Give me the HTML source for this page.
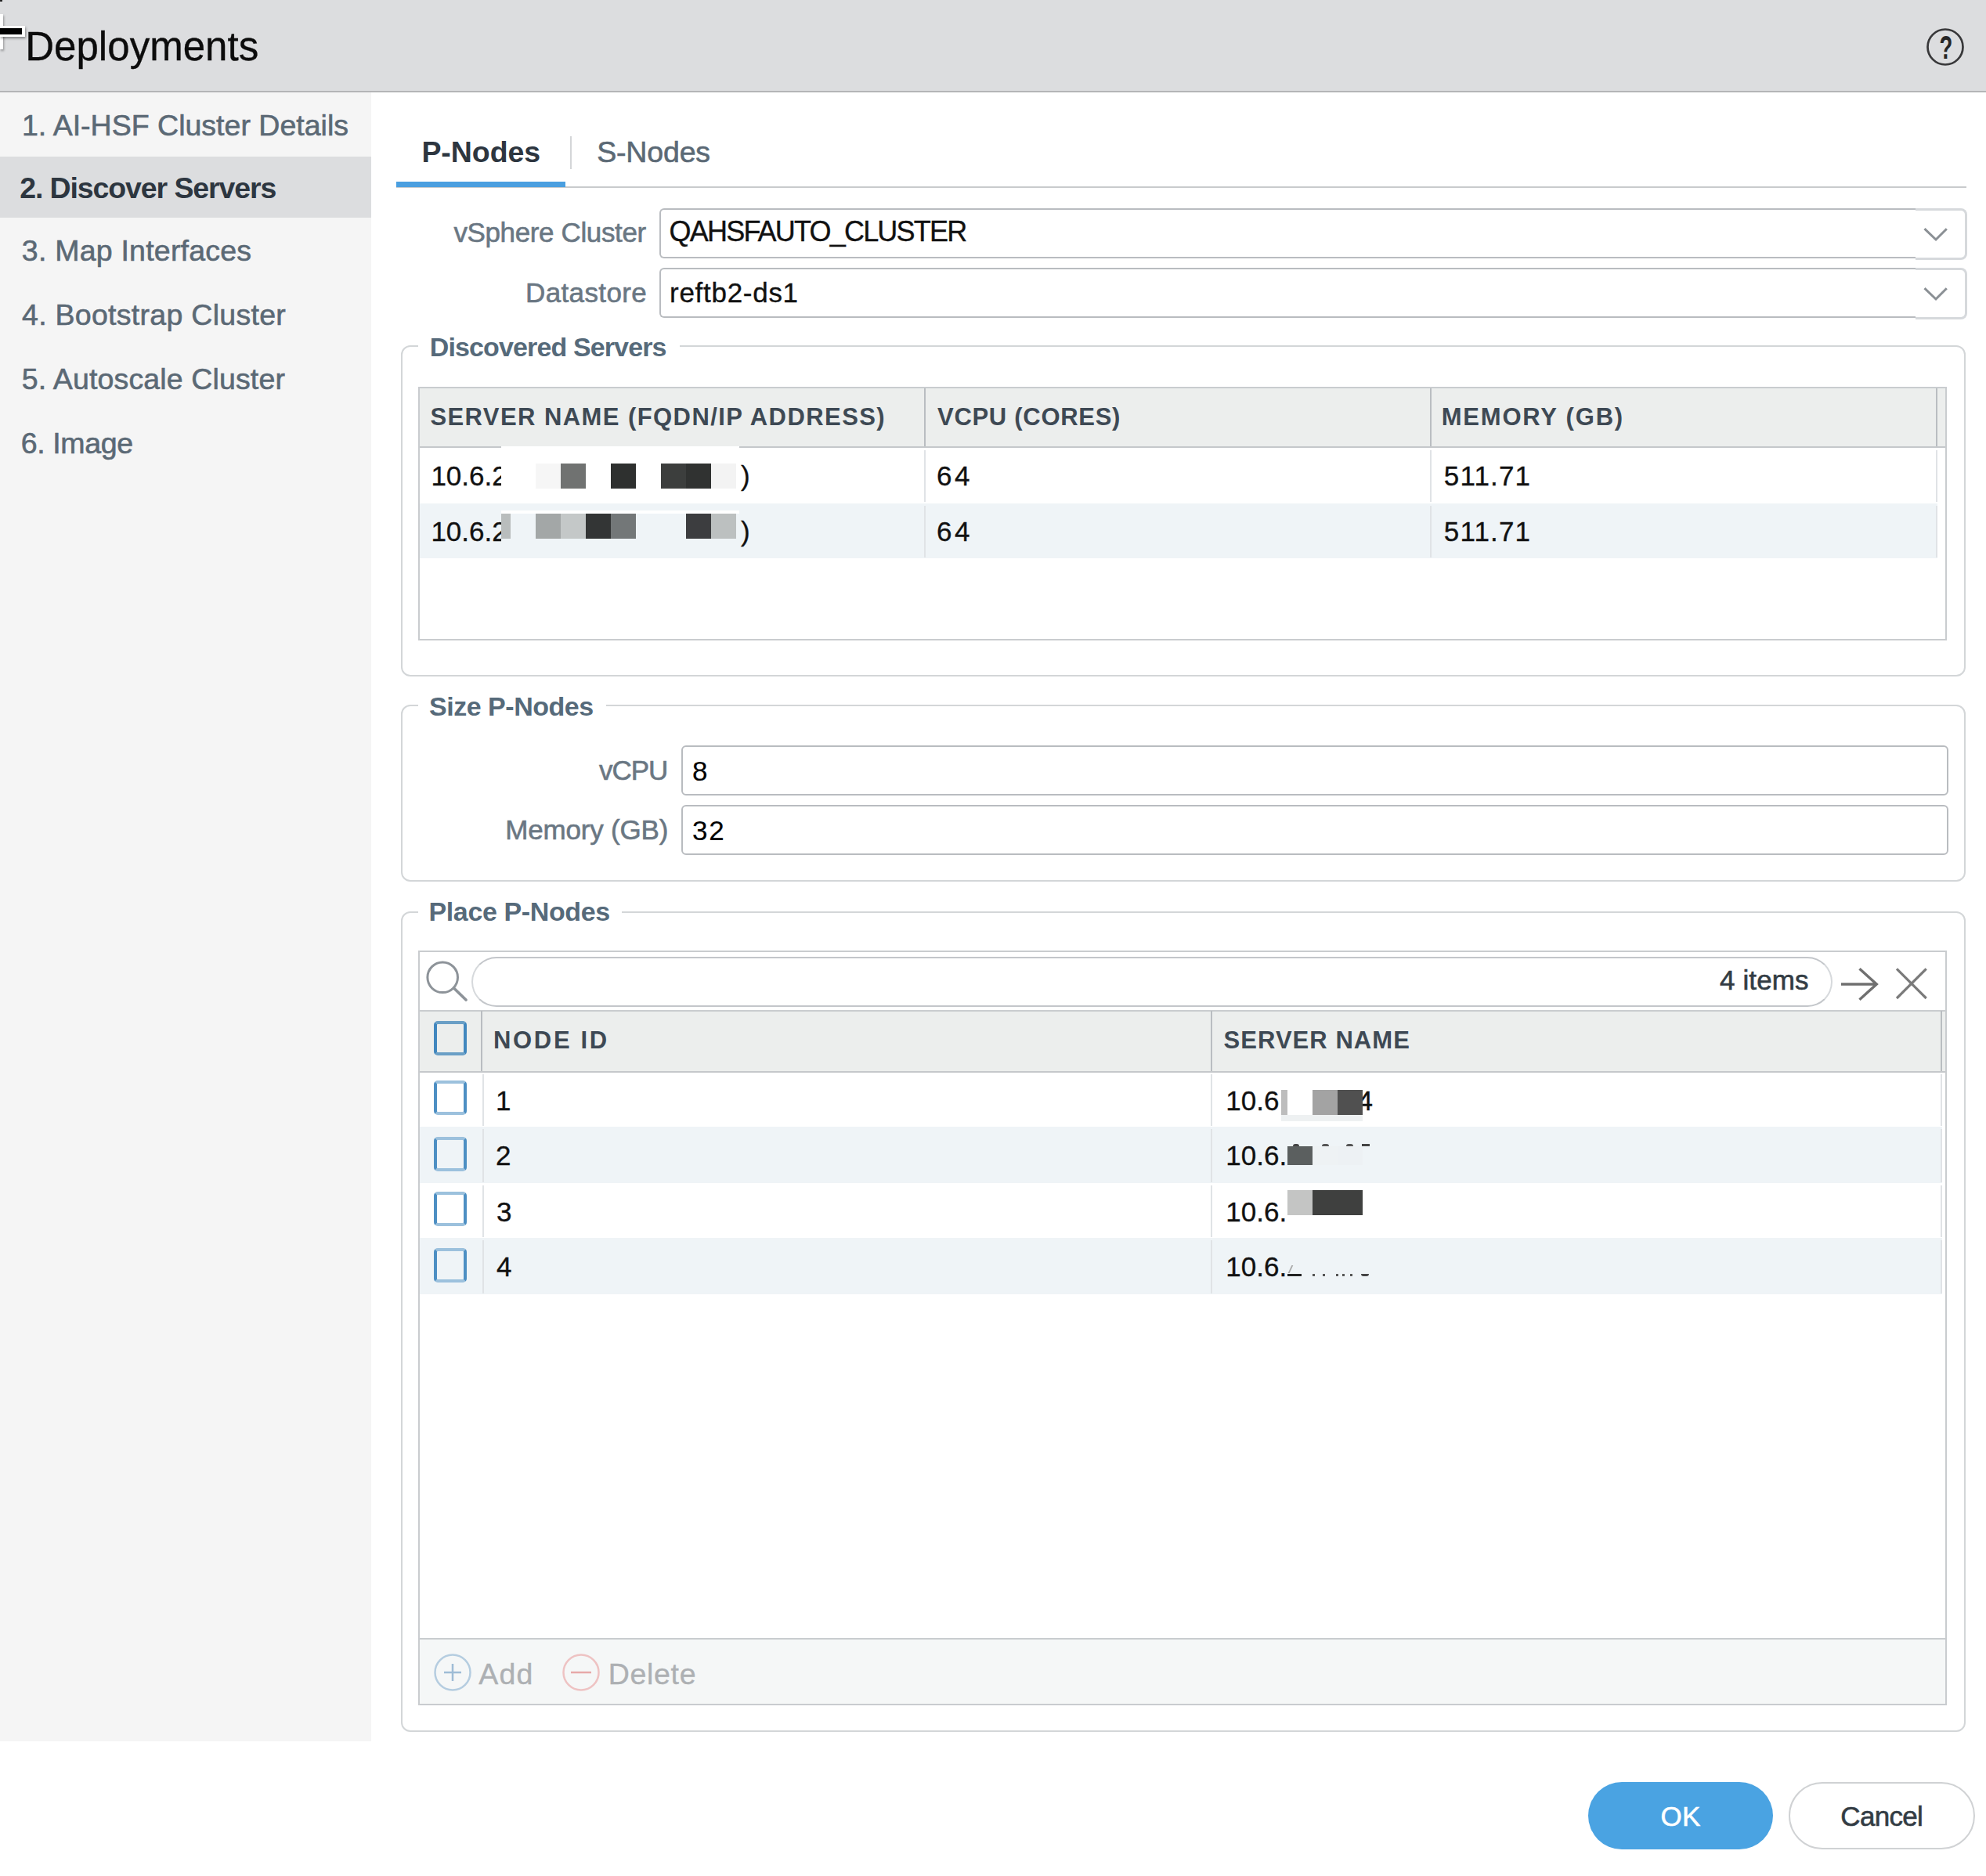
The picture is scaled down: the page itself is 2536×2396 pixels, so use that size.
<!DOCTYPE html>
<html lang="en"><head><meta charset="utf-8"><title>Deployments</title>
<style>
html,body{margin:0;padding:0;}
body{width:2536px;height:2396px;position:relative;overflow:hidden;background:#fff;font-family:"Liberation Sans",sans-serif;}
.a{position:absolute;box-sizing:border-box;}
.t{position:absolute;white-space:nowrap;line-height:1;font-family:"Liberation Sans",sans-serif;}
#hdr{left:0;top:0;width:2536px;height:116px;background:#dcdddf;}
#hdrline{left:0;top:116px;width:2536px;height:2px;background:#b4b5b7;}
#side{left:0;top:118px;width:474px;height:2106px;background:#f5f5f5;}
#sel{left:0;top:200px;width:474px;height:78px;background:#dcdddf;}
#tabline{left:506px;top:238px;width:2005px;height:2px;background:#c9cbcd;}
#tabblue{left:506px;top:232px;width:216px;height:7px;background:#4a9fe0;}
#tabsep{left:728px;top:174px;width:2px;height:42px;background:#d4d6d8;}
.inp{border:2px solid #b9bcc0;border-radius:6px;background:#fff;}
.trig{border:3px solid #d6d9dc;border-left:none;border-radius:0 8px 8px 0;background:#fff;}
.fs{border:2px solid #d3d6d8;border-radius:12px;}
.lg{background:#fff;height:6px;}
.grid{border:2px solid #c9cccf;background:#fff;}
.gh{background:#eceeed;border-bottom:2px solid #c5c8cb;}
.vd{width:2px;background:#b9bdc1;}
.vl{width:2px;background:#e0e3e6;}
.alt{background:#eff4f7;}
.cb{width:42px;height:44px;border:4px solid;border-color:#9cc1dd #4d8fc3;border-radius:5px;background:transparent;}
.cbh{border-color:#6a9fc6 #4187be;}
.px{position:absolute;}
.mz{z-index:5;}

</style></head><body>
<div class="a" id="hdr"></div>
<div class="a" id="hdrline"></div>
<div class="a" id="side"></div>
<div class="a" id="sel"></div>
<svg class="a" style="left:2456px;top:32px" width="56" height="56" viewBox="0 0 56 56"><circle cx="28" cy="28" r="22.5" fill="none" stroke="#38383a" stroke-width="2.7"/></svg>
<div class="a" style="left:0;top:18px;width:4px;height:45px;background:#fff;box-shadow:1px 2px 3px rgba(0,0,0,.35)"></div>
<div class="a" style="left:0;top:33px;width:32px;height:14px;background:#fff;box-shadow:1px 2px 3px rgba(0,0,0,.4)"></div>
<div class="a" style="left:0;top:36px;width:28px;height:8px;background:#000"></div>
<div class="a" style="left:0;top:0;width:3px;height:2px;background:#222"></div>
<div class="a" style="left:2463.5px;top:39.2px;width:42px;height:43px;text-align:center;font-weight:700;font-size:43px;line-height:1;color:#262626;transform:scaleX(.64)">?</div>
<div class="a" id="tabline"></div>
<div class="a" id="tabblue"></div>
<div class="a" id="tabsep"></div>

<!-- combos -->
<div class="a inp" style="left:842px;top:266px;width:1606px;height:64px;border-right:none;border-radius:6px 0 0 6px"></div>
<div class="a trig" style="left:2446px;top:266px;width:66px;height:66px"></div>
<svg class="a" style="left:2452px;top:286px" width="40" height="28" viewBox="0 0 40 28"><path d="M5.5 6.2 L20 20 L33.8 6.2" fill="none" stroke="#8b9095" stroke-width="3"/></svg>
<div class="a inp" style="left:842px;top:342px;width:1606px;height:64px;border-right:none;border-radius:6px 0 0 6px"></div>
<div class="a trig" style="left:2446px;top:342px;width:66px;height:66px"></div>
<svg class="a" style="left:2452px;top:362px" width="40" height="28" viewBox="0 0 40 28"><path d="M5.5 6.2 L20 20 L33.8 6.2" fill="none" stroke="#8b9095" stroke-width="3"/></svg>

<!-- fieldset 1 -->
<div class="a fs" style="left:512px;top:441px;width:1998px;height:423px"></div>
<div class="a lg" style="left:534px;top:439px;width:334px"></div>
<div class="a grid" style="left:534px;top:494px;width:1952px;height:324px"></div>
<div class="a gh" style="left:536px;top:496px;width:1948px;height:76px"></div>
<div class="a vd" style="left:1180px;top:496px;height:74px"></div>
<div class="a vd" style="left:1826px;top:496px;height:74px"></div>
<div class="a vd" style="left:2472px;top:496px;height:74px"></div>
<div class="a alt" style="left:536px;top:643px;width:1938px;height:70px"></div>
<div class="a vl" style="left:1180px;top:575px;height:66px"></div>
<div class="a vl" style="left:1180px;top:646px;height:66px"></div>
<div class="a vl" style="left:1826px;top:575px;height:66px"></div>
<div class="a vl" style="left:1826px;top:646px;height:66px"></div>
<div class="a vl" style="left:2472px;top:575px;height:66px"></div>
<div class="a vl" style="left:2472px;top:646px;height:66px"></div>

<!-- fieldset 2 -->
<div class="a fs" style="left:512px;top:900px;width:1998px;height:226px"></div>
<div class="a lg" style="left:534px;top:898px;width:240px"></div>
<div class="a inp" style="left:870px;top:952px;width:1618px;height:64px"></div>
<div class="a inp" style="left:870px;top:1028px;width:1618px;height:64px"></div>

<!-- fieldset 3 -->
<div class="a fs" style="left:512px;top:1164px;width:1998px;height:1048px"></div>
<div class="a lg" style="left:534px;top:1162px;width:260px"></div>
<div class="a grid" style="left:534px;top:1214px;width:1952px;height:964px"></div>
<div class="a" style="left:536px;top:1290px;width:1948px;height:2px;background:#c9cccf"></div>
<div class="a" style="left:602px;top:1222px;width:1738px;height:64px;border:2px solid #c3c6ca;border-left-color:#d6d9dc;border-right-color:#d6d9dc;border-radius:32px;background:#fff"></div>
<svg class="a" style="left:540px;top:1224px" width="62" height="62" viewBox="0 0 62 62"><circle cx="25.2" cy="24.3" r="19.3" fill="none" stroke="#8d9399" stroke-width="3"/><path d="M39.5 38 L55 53" stroke="#8d9399" stroke-width="3.6" stroke-linecap="round"/></svg>
<svg class="a" style="left:2346px;top:1232px" width="56" height="50" viewBox="0 0 56 50"><path d="M5 25 H50 M28.5 5.3 L50.3 25 L28.5 44.7" fill="none" stroke="#707070" stroke-width="3.4"/></svg>
<svg class="a" style="left:2417px;top:1232px" width="48" height="48" viewBox="0 0 48 48"><path d="M5 5.3 L42.7 43 M42.7 5.3 L5 43" fill="none" stroke="#7a7a7a" stroke-width="3.2"/></svg>
<div class="a gh" style="left:536px;top:1292px;width:1948px;height:78px"></div>
<div class="a vd" style="left:614px;top:1291px;height:77px"></div>
<div class="a vd" style="left:1546px;top:1291px;height:77px"></div>
<div class="a vd" style="left:2478px;top:1291px;height:77px"></div>
<div class="a alt" style="left:536px;top:1439px;width:1944px;height:72px"></div>
<div class="a alt" style="left:536px;top:1581px;width:1944px;height:72px"></div>
<div class="a vl" style="left:616px;top:1372px;height:66px"></div>
<div class="a vl" style="left:616px;top:1442px;height:68px"></div>
<div class="a vl" style="left:616px;top:1514px;height:66px"></div>
<div class="a vl" style="left:616px;top:1584px;height:68px"></div>
<div class="a vl" style="left:1546px;top:1372px;height:66px"></div>
<div class="a vl" style="left:1546px;top:1442px;height:68px"></div>
<div class="a vl" style="left:1546px;top:1514px;height:66px"></div>
<div class="a vl" style="left:1546px;top:1584px;height:68px"></div>
<div class="a vl" style="left:2478px;top:1372px;height:66px"></div>
<div class="a vl" style="left:2478px;top:1442px;height:68px"></div>
<div class="a vl" style="left:2478px;top:1514px;height:66px"></div>
<div class="a vl" style="left:2478px;top:1584px;height:68px"></div>
<div class="a cb cbh" style="left:554px;top:1304px"></div>
<div class="a cb" style="left:554px;top:1380px"></div>
<div class="a cb" style="left:554px;top:1452px"></div>
<div class="a cb" style="left:554px;top:1522px"></div>
<div class="a cb" style="left:554px;top:1594px"></div>
<div class="a" style="left:536px;top:2092px;width:1948px;height:84px;background:#f5f7f7;border-top:2px solid #c9cccf"></div>
<svg class="a" style="left:552px;top:2110px" width="52" height="52" viewBox="0 0 52 52"><circle cx="26" cy="26" r="22.5" fill="none" stroke="#b5cde0" stroke-width="2.5"/><path d="M15 26 H37 M26 15 V37" stroke="#9fbdd6" stroke-width="2.5"/></svg>
<svg class="a" style="left:716px;top:2110px" width="52" height="52" viewBox="0 0 52 52"><circle cx="26" cy="26" r="22.5" fill="none" stroke="#eec3c3" stroke-width="2.5"/><path d="M13 26 H39" stroke="#e7a9a9" stroke-width="2.5"/></svg>

<!-- buttons -->
<div class="a" style="left:2028px;top:2276px;width:236px;height:86px;border-radius:44px;background:#4aa3e2"></div>
<div class="a" style="left:2284px;top:2276px;width:238px;height:86px;border-radius:44px;background:#fff;border:2px solid #d0d2d4"></div>

<!-- redaction mosaics grid 1 -->
<div class="a mz" style="left:640px;top:570px;width:304px;height:72px;background:#fff"></div>
<div class="a mz" style="left:684px;top:592px;width:32px;height:32px;background:#f6f6f6"></div>
<div class="a mz" style="left:716px;top:592px;width:32px;height:32px;background:#707271"></div>
<div class="a mz" style="left:780px;top:592px;width:32px;height:32px;background:#2e302f"></div>
<div class="a mz" style="left:844px;top:592px;width:32px;height:32px;background:#3c3e3d"></div>
<div class="a mz" style="left:876px;top:592px;width:32px;height:32px;background:#303231"></div>
<div class="a mz" style="left:908px;top:592px;width:32px;height:32px;background:#f3f3f3"></div>
<div class="a mz" style="left:640px;top:652px;width:304px;height:42px;background:#eff4f7"></div>
<div class="a mz" style="left:640px;top:652px;width:304px;height:4px;background:#fff"></div>
<div class="a mz" style="left:640px;top:656px;width:12px;height:32px;background:#b9bdbd"></div>
<div class="a mz" style="left:684px;top:656px;width:32px;height:32px;background:#a3a7a7"></div>
<div class="a mz" style="left:716px;top:656px;width:32px;height:32px;background:#c4c8c8"></div>
<div class="a mz" style="left:748px;top:656px;width:32px;height:32px;background:#333535"></div>
<div class="a mz" style="left:780px;top:656px;width:32px;height:32px;background:#737778"></div>
<div class="a mz" style="left:876px;top:656px;width:32px;height:32px;background:#3c3d3f"></div>
<div class="a mz" style="left:908px;top:656px;width:32px;height:32px;background:#bcc0c0"></div>
<!-- redaction mosaics grid 2 -->
<div class="a mz" style="left:1636px;top:1392px;width:104px;height:32px;background:#fff"></div>
<div class="a mz" style="left:1636px;top:1392px;width:8px;height:32px;background:#bdbdbd"></div>
<div class="a mz" style="left:1676px;top:1392px;width:32px;height:32px;background:#a3a3a3"></div>
<div class="a mz" style="left:1708px;top:1392px;width:32px;height:32px;background:#505050"></div>
<div class="a mz" style="left:1636px;top:1424px;width:104px;height:8px;background:#eef1f2"></div>
<div class="a mz" style="left:1644px;top:1464px;width:32px;height:24px;background:#5b5f5f"></div>
<div class="a mz" style="left:1676px;top:1464px;width:32px;height:24px;background:#eef2f4"></div>
<div class="a mz" style="left:1708px;top:1464px;width:32px;height:24px;background:#edf1f4"></div>
<div class="a mz" style="left:1644px;top:1520px;width:32px;height:32px;background:#c4c5c4"></div>
<div class="a mz" style="left:1676px;top:1520px;width:64px;height:32px;background:#3f403f"></div>

<!-- remnants -->
<div class="a mz" style="left:1651px;top:1461px;width:8px;height:3px;border-radius:4px 4px 0 0;background:#444"></div>
<div class="a mz" style="left:1688px;top:1461px;width:9px;height:3px;border-radius:4px 4px 0 0;background:#555"></div>
<div class="a mz" style="left:1719px;top:1461px;width:9px;height:3px;border-radius:4px 4px 0 0;background:#555"></div>
<div class="a mz" style="left:1739px;top:1461px;width:10px;height:3px;background:#444"></div>
<div class="a mz" style="left:1644px;top:1627px;width:18px;height:3px;background:#222"></div>
<div class="a mz" style="left:1647px;top:1616px;width:2px;height:10px;background:#aaa;transform:skewX(-25deg)"></div>
<div class="a mz" style="left:1676px;top:1627px;width:3px;height:3px;background:#555"></div>
<div class="a mz" style="left:1689px;top:1627px;width:3px;height:3px;background:#555"></div>
<div class="a mz" style="left:1706px;top:1627px;width:3px;height:3px;background:#555"></div>
<div class="a mz" style="left:1714px;top:1627px;width:3px;height:3px;background:#555"></div>
<div class="a mz" style="left:1724px;top:1627px;width:3px;height:3px;background:#555"></div>
<div class="a mz" style="left:1738px;top:1627px;width:10px;height:3px;border-radius:0 0 4px 4px;background:#444"></div>

<span class="t" id="t0" style="left:32.2px;top:34.1px;font-size:51px;font-weight:400;color:#0c0c0c;letter-spacing:0.040px;-webkit-text-stroke:0.35px #0c0c0c;">Deployments</span>
<span class="t" id="t1" style="left:28.0px;top:141.7px;font-size:37.5px;font-weight:400;color:#5b6975;letter-spacing:0.008px;-webkit-text-stroke:0.6px #5b6975;">1. AI-HSF Cluster Details</span>
<span class="t" id="t2" style="left:25.2px;top:221.6px;font-size:37.5px;font-weight:700;color:#2d3640;letter-spacing:-1.111px;">2. Discover Servers</span>
<span class="t" id="t3" style="left:27.8px;top:302.0px;font-size:37.5px;font-weight:400;color:#5b6975;letter-spacing:0.225px;-webkit-text-stroke:0.6px #5b6975;">3. Map Interfaces</span>
<span class="t" id="t4" style="left:28.0px;top:383.6px;font-size:37.5px;font-weight:400;color:#5b6975;letter-spacing:0.284px;-webkit-text-stroke:0.6px #5b6975;">4. Bootstrap Cluster</span>
<span class="t" id="t5" style="left:27.8px;top:466.1px;font-size:37.5px;font-weight:400;color:#5b6975;letter-spacing:0.137px;-webkit-text-stroke:0.6px #5b6975;">5. Autoscale Cluster</span>
<span class="t" id="t6" style="left:26.8px;top:548.1px;font-size:37.5px;font-weight:400;color:#5b6975;letter-spacing:-0.386px;-webkit-text-stroke:0.6px #5b6975;">6. Image</span>
<span class="t" id="t7" style="left:538.4px;top:175.5px;font-size:37.5px;font-weight:700;color:#2d3640;letter-spacing:-0.050px;">P-Nodes</span>
<span class="t" id="t8" style="left:762.2px;top:175.5px;font-size:37.5px;font-weight:400;color:#5b6975;letter-spacing:-0.167px;-webkit-text-stroke:0.6px #5b6975;">S-Nodes</span>
<span class="t" id="t9" style="left:579.4px;top:278.8px;font-size:35px;font-weight:400;color:#6a7783;letter-spacing:-0.371px;-webkit-text-stroke:0.6px #6a7783;">vSphere Cluster</span>
<span class="t" id="t10" style="left:671.0px;top:355.6px;font-size:35px;font-weight:400;color:#6a7783;letter-spacing:0.375px;-webkit-text-stroke:0.6px #6a7783;">Datastore</span>
<span class="t" id="t11" style="left:854.6px;top:277.9px;font-size:36px;font-weight:400;color:#111;letter-spacing:-1.806px;-webkit-text-stroke:0.35px #111;">QAHSFAUTO_CLUSTER</span>
<span class="t" id="t12" style="left:855.0px;top:355.6px;font-size:35px;font-weight:400;color:#111;letter-spacing:0.722px;-webkit-text-stroke:0.35px #111;">reftb2-ds1</span>
<span class="t" id="t13" style="left:548.8px;top:426.4px;font-size:34px;font-weight:700;color:#566a7a;letter-spacing:-0.876px;">Discovered Servers</span>
<span class="t" id="t14" style="left:548.0px;top:885.1px;font-size:34px;font-weight:700;color:#566a7a;letter-spacing:-0.473px;">Size P-Nodes</span>
<span class="t" id="t15" style="left:547.5px;top:1146.6px;font-size:34px;font-weight:700;color:#566a7a;letter-spacing:-0.375px;">Place P-Nodes</span>
<span class="t" id="t16" style="left:549.4px;top:517.0px;font-size:31px;font-weight:700;color:#3e4954;letter-spacing:1.429px;">SERVER NAME (FQDN/IP ADDRESS)</span>
<span class="t" id="t17" style="left:1197.0px;top:517.0px;font-size:31px;font-weight:700;color:#3e4954;letter-spacing:0.709px;">VCPU (CORES)</span>
<span class="t" id="t18" style="left:1840.7px;top:517.0px;font-size:31px;font-weight:700;color:#3e4954;letter-spacing:1.790px;">MEMORY (GB)</span>
<span class="t" id="t19" style="left:550.4px;top:590.0px;font-size:35px;font-weight:400;color:#111;-webkit-text-stroke:0.35px #111;">10.6.2</span>
<span class="t" id="t20" style="left:550.4px;top:661.2px;font-size:35px;font-weight:400;color:#111;-webkit-text-stroke:0.35px #111;">10.6.2</span>
<span class="t" id="t21" style="left:946.0px;top:590.0px;font-size:35px;font-weight:400;color:#111;-webkit-text-stroke:0.35px #111;">)</span>
<span class="t" id="t22" style="left:946.0px;top:661.2px;font-size:35px;font-weight:400;color:#111;-webkit-text-stroke:0.35px #111;">)</span>
<span class="t" id="t23" style="left:1196.0px;top:590.0px;font-size:35px;font-weight:400;color:#111;letter-spacing:3.500px;-webkit-text-stroke:0.35px #111;">64</span>
<span class="t" id="t24" style="left:1196.0px;top:661.2px;font-size:35px;font-weight:400;color:#111;letter-spacing:3.500px;-webkit-text-stroke:0.35px #111;">64</span>
<span class="t" id="t25" style="left:1843.8px;top:590.0px;font-size:35px;font-weight:400;color:#111;letter-spacing:1.140px;-webkit-text-stroke:0.35px #111;">511.71</span>
<span class="t" id="t26" style="left:1843.8px;top:661.2px;font-size:35px;font-weight:400;color:#111;letter-spacing:1.140px;-webkit-text-stroke:0.35px #111;">511.71</span>
<span class="t" id="t27" style="left:765.0px;top:965.8px;font-size:35px;font-weight:400;color:#6a7783;letter-spacing:-1.067px;-webkit-text-stroke:0.6px #6a7783;">vCPU</span>
<span class="t" id="t28" style="left:645.3px;top:1042.2px;font-size:35px;font-weight:400;color:#6a7783;letter-spacing:-0.190px;-webkit-text-stroke:0.6px #6a7783;">Memory (GB)</span>
<span class="t" id="t29" style="left:884.0px;top:966.5px;font-size:35px;font-weight:400;color:#000;-webkit-text-stroke:0.15px #000;">8</span>
<span class="t" id="t30" style="left:884.0px;top:1042.5px;font-size:35px;font-weight:400;color:#000;letter-spacing:1.900px;-webkit-text-stroke:0.15px #000;">32</span>
<span class="t" id="t31" style="left:2196.0px;top:1233.8px;font-size:35px;font-weight:400;color:#333c44;letter-spacing:0.133px;-webkit-text-stroke:0.6px #333c44;">4 items</span>
<span class="t" id="t32" style="left:630.0px;top:1313.4px;font-size:31px;font-weight:700;color:#3e4954;letter-spacing:2.667px;">NODE ID</span>
<span class="t" id="t33" style="left:1562.6px;top:1313.4px;font-size:31px;font-weight:700;color:#3e4954;letter-spacing:1.040px;">SERVER NAME</span>
<span class="t" id="t34" style="left:633.0px;top:1388.2px;font-size:35px;font-weight:400;color:#111;-webkit-text-stroke:0.35px #111;">1</span>
<span class="t" id="t35" style="left:633.0px;top:1458.0px;font-size:35px;font-weight:400;color:#111;-webkit-text-stroke:0.35px #111;">2</span>
<span class="t" id="t36" style="left:634.0px;top:1529.8px;font-size:35px;font-weight:400;color:#111;-webkit-text-stroke:0.35px #111;">3</span>
<span class="t" id="t37" style="left:634.0px;top:1600.0px;font-size:35px;font-weight:400;color:#111;-webkit-text-stroke:0.35px #111;">4</span>
<span class="t" id="t38" style="left:1733.5px;top:1388.2px;font-size:35px;font-weight:400;color:#111;-webkit-text-stroke:0.35px #111;">4</span>
<span class="t" id="t39" style="left:1565.3px;top:1388.2px;font-size:35px;font-weight:400;color:#111;-webkit-text-stroke:0.35px #111;">10.6</span>
<span class="t" id="t40" style="left:1565.3px;top:1458.2px;font-size:35px;font-weight:400;color:#111;-webkit-text-stroke:0.35px #111;">10.6.</span>
<span class="t" id="t41" style="left:1565.3px;top:1529.5px;font-size:35px;font-weight:400;color:#111;-webkit-text-stroke:0.35px #111;">10.6.</span>
<span class="t" id="t42" style="left:1565.3px;top:1600.2px;font-size:35px;font-weight:400;color:#111;-webkit-text-stroke:0.35px #111;">10.6.</span>
<span class="t" id="t43" style="left:611.2px;top:2119.6px;font-size:37.5px;font-weight:400;color:#adb0b3;letter-spacing:1.200px;-webkit-text-stroke:0.35px #adb0b3;">Add</span>
<span class="t" id="t44" style="left:776.7px;top:2119.6px;font-size:37.5px;font-weight:400;color:#adb0b3;letter-spacing:0.680px;-webkit-text-stroke:0.35px #adb0b3;">Delete</span>
<span class="t" id="t45" style="left:2120.5px;top:2301.8px;font-size:35px;font-weight:400;color:#fff;letter-spacing:0.200px;-webkit-text-stroke:0.6px #fff;">OK</span>
<span class="t" id="t46" style="left:2350.3px;top:2301.8px;font-size:35px;font-weight:400;color:#333c44;letter-spacing:-0.680px;-webkit-text-stroke:0.6px #333c44;">Cancel</span>
</body></html>
